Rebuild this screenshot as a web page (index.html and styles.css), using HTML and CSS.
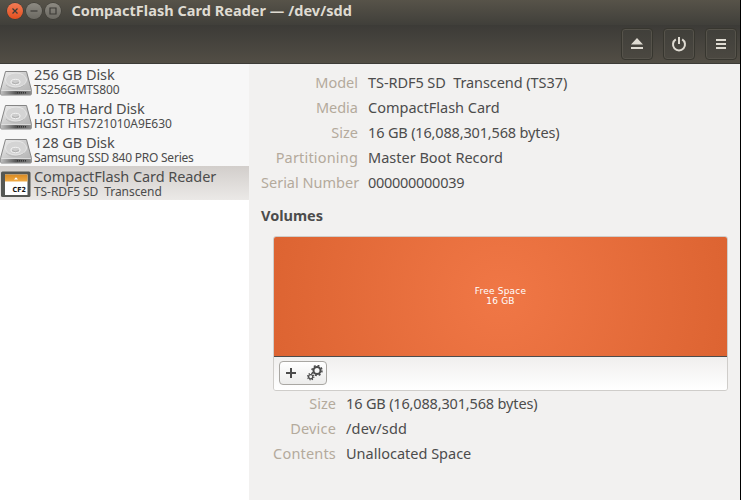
FILE: index.html
```
<!DOCTYPE html>
<html lang="en">
<head>
<meta charset="utf-8">
<title>CompactFlash Card Reader — /dev/sdd</title>
<link rel="stylesheet" href="styles.css">
</head>
<body>
<svg class="defs" width="0" height="0" aria-hidden="true">
  <defs>
    <linearGradient id="metal" x1="0" y1="0" x2="1" y2="1">
      <stop offset="0" stop-color="#efefef"/><stop offset=".5" stop-color="#c9c9c9"/><stop offset="1" stop-color="#b0b0b0"/>
    </linearGradient>
    <linearGradient id="front" x1="0" x2="1">
      <stop offset="0" stop-color="#bdbdbd"/><stop offset=".5" stop-color="#555"/><stop offset="1" stop-color="#858585"/>
    </linearGradient>
    <linearGradient id="label" x1="0" y1="0" x2="0" y2="1">
      <stop offset="0" stop-color="#d98a22"/><stop offset="1" stop-color="#f0aa44"/>
    </linearGradient>
    <symbol id="disk" viewBox="0 0 32 32">
      <path d="M5.500 5.500h21L31.300 23.500v4.500q0 1-1 1H1.700q-1 0-1-1v-4.500z" fill="url(#metal)" stroke="#858585"/>
      <ellipse cx="16" cy="14" rx="10.500" ry="7" fill="#d4d4d4" stroke="#e6e6e6"/>
      <path d="M6 19a10.500 7 0 0 0 18 0" fill="none" stroke="#b2b2b2" stroke-width=".8"/>
      <ellipse cx="15.500" cy="16" rx="4.500" ry="2.700" fill="#cdcdcd" stroke="#f4f4f4"/>
      <path d="M12 16.500q3 2.500 7 0" fill="none" stroke="#a0a0a0" stroke-width=".7"/>
      <path d="M1.200 25h29.600v3.500H1.200z" fill="url(#front)"/>
      <path d="M1.200 24.600h29.600" stroke="#e6e6e6" stroke-width=".8"/>
      <path d="M17 26.800h9" stroke="#333" stroke-width="1.500" stroke-dasharray="1 1"/>
    </symbol>
  </defs>
</svg>
<div class="window">
  <header class="titlebar">
    <span class="wm close"><svg viewBox="0 0 16 16"><path d="M5.500 5.500l5 5m0-5l-5 5"/></svg></span>
    <span class="wm"><svg viewBox="0 0 16 16"><path d="M4.500 8h7"/></svg></span>
    <span class="wm"><svg viewBox="0 0 16 16"><path d="M5 5h6v6H5z"/></svg></span>
    <h1>CompactFlash Card Reader — /dev/sdd</h1>
  </header>
  <div class="toolbar">
    <button class="tool" aria-label="Eject"><svg viewBox="0 0 16 16"><path fill="currentColor" d="M8 2l6 6.500H2zM2 11h12v2H2z"/></svg></button>
    <button class="tool" aria-label="Power"><svg viewBox="0 0 16 16" fill="none" stroke="currentColor" stroke-width="2"><path d="M4.800 3.400a6 6 0 1 0 6.400 0M8 1v7"/></svg></button>
    <button class="tool" aria-label="Menu"><svg viewBox="0 0 16 16"><path fill="currentColor" d="M3 3h10v2H3zM3 7h10v2H3zM3 11h10v2H3z"/></svg></button>
  </div>
  <div class="content">
    <nav class="sidebar">
      <div class="device"><svg class="icon"><use href="#disk"/></svg><div><b class="snug">256 GB Disk</b><small class="tight">TS256GMTS800</small></div></div>
      <div class="device"><svg class="icon"><use href="#disk"/></svg><div><b class="snug">1.0 TB Hard Disk</b><small class="snug">HGST HTS721010A9E630</small></div></div>
      <div class="device"><svg class="icon"><use href="#disk"/></svg><div><b class="snug">128 GB Disk</b><small class="tighter">Samsung SSD 840 PRO Series</small></div></div>
      <div class="device selected"><svg class="icon" viewBox="0 0 32 32"><rect x="1" y="3.500" width="29.500" height="25.500" rx="1.500" fill="#555753"/><path d="M5 6.500h22.500V27H5z" fill="#fff"/><path d="M5 6.500h22.500v7H5z" fill="url(#label)"/><path d="M14 11.500l2-2.200 2 2.200z" fill="#fff"/><text class="cf" x="12.500" y="24.300" textLength="13.500" lengthAdjust="spacingAndGlyphs">CF2</text></svg><div><b class="snug">CompactFlash Card Reader</b><small class="snug">TS-RDF5 SD&nbsp; Transcend</small></div></div>
    </nav>
    <main class="details">
      <dl class="fields drive">
        <dt>Model</dt><dd class="snug">TS-RDF5 SD&nbsp; Transcend (TS37)</dd>
        <dt>Media</dt><dd>CompactFlash Card</dd>
        <dt>Size</dt><dd class="tight">16 GB (16,088,301,568 bytes)</dd>
        <dt class="loose">Partitioning</dt><dd>Master Boot Record</dd>
        <dt>Serial Number</dt><dd class="digits">000000000039</dd>
      </dl>
      <h2>Volumes</h2>
      <section class="volumes">
        <div class="space"><span>Free Space</span><span>16 GB</span></div>
        <div class="actions"><div class="group">
          <svg viewBox="0 0 16 16" class="plus"><path d="M8 3v10M3 8h10"/></svg>
          <svg viewBox="0 0 16 16" class="gears"><circle cx="10" cy="5.500" r="3.500"/><circle class="teeth" cx="10" cy="5.500" r="5"/><circle class="small" cx="3.700" cy="11.700" r="2.100"/><circle class="small teeth" cx="3.700" cy="11.700" r="3.100"/></svg>
        </div></div>
      </section>
      <dl class="fields volume">
        <dt>Size</dt><dd class="tight">16 GB (16,088,301,568 bytes)</dd>
        <dt class="loose">Device</dt><dd class="loose">/dev/sdd</dd>
        <dt class="loose">Contents</dt><dd>Unallocated Space</dd>
      </dl>
    </main>
  </div>
</div>
</body>
</html>
```
FILE: styles.css
```
* { box-sizing: border-box; }
body { margin: 0; font: 14.5px/25px "Noto Sans", sans-serif; color: #4c4c4c; }
h1, h2, dl, dd, dt { margin: 0; }
.defs { position: absolute; }
.snug { letter-spacing: -.07px; }
.tight { letter-spacing: -.16px; }
.tighter { letter-spacing: -.23px; }
.digits { letter-spacing: -.28px; }
.loose { letter-spacing: .18px; }
.window { width: 741px; height: 500px; border-right: 1px solid #000; background: #f2f1f0; overflow: hidden; }
.titlebar { height: 25px; display: flex; align-items: center; gap: 3px; padding: 0 0 4px 6.5px; background: linear-gradient(#575349, #403f3a); }
.wm { width: 16px; height: 16px; border-radius: 50%; background: linear-gradient(#8d8a82, #6b6962); box-shadow: 0 0 0 .5px #383732; }
.wm svg { display: block; fill: none; stroke: #3c3b37; stroke-width: 1.200; }
.close { background: linear-gradient(#f37b55, #e2501f); }
h1 { margin: -2px 0 0 8px; font-size: 14.5px; line-height: 20px; font-weight: 700; letter-spacing: .03px; color: #dfdbd2; white-space: nowrap; }
.toolbar { height: 39px; display: flex; justify-content: flex-end; gap: 10px; padding: 3px 3px 0 0; background: linear-gradient(#3c3b37, #524e45); border-bottom: 1px solid #3c3b37; }
.tool { width: 32px; height: 32px; padding: 7px; border: 1px solid #37362f; border-radius: 4px; color: #dfdbd2; background: linear-gradient(#403f3a, #4b4841); box-shadow: inset 0 0 0 1px #56534b; }
.tool svg { display: block; width: 16px; height: 16px; }
.content { display: flex; height: 436px; }
.sidebar { width: 249px; background: #fff; }
.device { height: 34px; display: flex; gap: 2px; background: #f7f7f7; white-space: nowrap; }
.device b, .device small { display: block; font-weight: 400; }
.device b { font-size: 14.5px; line-height: 18px; margin-top: 1px; }
.device small { font-size: 12px; line-height: 15px; margin-top: -1px; }
.icon { width: 32px; height: 32px; margin-top: 2px; }
.selected { background: linear-gradient(#d2cecb, #ebe9e7); }
.cf { font: 700 7px "DejaVu Sans", sans-serif; fill: #111; }
.details { width: 491px; padding: 6px 12px; }
.fields { display: grid; grid-template-columns: 97px 1fr; column-gap: 10px; line-height: 25px; white-space: nowrap; }
.fields dt { text-align: right; color: #b4aa9c; }
h2 { font-size: 14.5px; line-height: 25px; margin-top: 8px; }
.volumes { width: 455px; height: 155px; margin: 8px 0 0 12px; border: 1px solid #cfcdca; border-radius: 3px; overflow: hidden; }
.space { height: 120px; display: flex; flex-direction: column; align-items: center; justify-content: center; font: 9px/10px "DejaVu Sans", sans-serif; letter-spacing: .2px; color: #fff; border-bottom: 1px solid #4c4c4c; background: radial-gradient(circle at center, #f07746, #dd6432 230px); }
.space span:first-child { margin-top: -1px; }
.actions { height: 33px; padding: 4px 5px; background: linear-gradient(#f0efee, #fff); }
.group { width: 48px; height: 24px; display: flex; align-items: center; justify-content: space-between; padding: 0 3px; border: 1px solid #a9a7a3; border-radius: 4px; background: linear-gradient(#fff, #ececeb); }
.group svg { width: 16px; height: 16px; fill: none; stroke: #4c4c4c; stroke-width: 2; }
.gears .teeth { stroke-width: 1.500; stroke-dasharray: 1.950 1.970; }
.gears .small { stroke-width: 1.300; }
.gears .small.teeth { stroke-dasharray: 1.200 1.230; }
.volume { grid-template-columns: 75px 1fr; }
```
